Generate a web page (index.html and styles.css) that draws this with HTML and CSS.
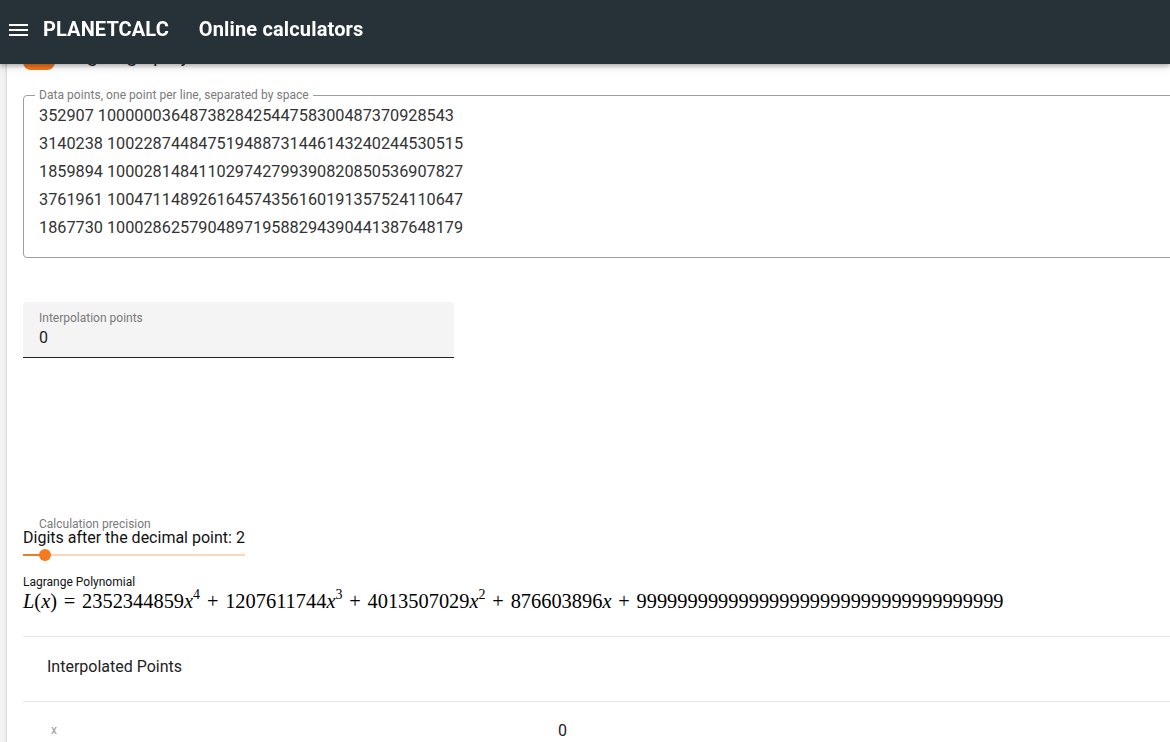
FILE: index.html
```html
<!DOCTYPE html>
<html lang="en">
<head>
<meta charset="utf-8">
<title>PLANETCALC - Lagrange polynomial</title>
<link rel="stylesheet" href="styles.css">
</head>
<body>
<header class="topbar">
  <span class="menu-icon"><span></span><span></span><span></span></span>
  <span class="brand">PLANETCALC</span>
  <span class="section">Online calculators</span>
</header>
<main class="card">
  <div class="title-row">
    <span class="toggle"></span>
    <span class="title">Lagrange polynomial</span>
  </div>
  <fieldset class="outlined">
    <legend>Data points, one point per line, separated by space</legend>
    <div class="data-lines">
      <div>352907 100000036487382842544758300487370928543</div>
      <div>3140238 100228744847519488731446143240244530515</div>
      <div>1859894 100028148411029742799390820850536907827</div>
      <div>3761961 100471148926164574356160191357524110647</div>
      <div>1867730 100028625790489719588294390441387648179</div>
    </div>
  </fieldset>
  <div class="filled">
    <div class="filled-label">Interpolation points</div>
    <div class="filled-value">0</div>
  </div>
  <div class="precision">
    <div class="precision-label">Calculation precision</div>
    <div class="precision-value">Digits after the decimal point: 2</div>
    <div class="slider"><span class="slider-fill"></span><span class="slider-thumb"></span></div>
  </div>
  <div class="result">
    <div class="result-label">Lagrange Polynomial</div>
    <div class="formula"><i>L</i>(<i>x</i>) <span class="op">=</span> 2352344859<i>x</i><sup>4</sup> <span class="op">+</span> 1207611744<i>x</i><sup>3</sup> <span class="op">+</span> 4013507029<i>x</i><sup>2</sup> <span class="op">+</span> 876603896<i>x</i> <span class="op">+</span> 999999999999999999999999999999999999</div>
  </div>
  <div class="table">
    <div class="table-title">Interpolated Points</div>
    <div class="table-row">
      <span class="col-head">x</span>
      <span class="col-val">0</span>
    </div>
  </div>
</main>
</body>
</html>
```
FILE: styles.css
```css
html, body {
  margin: 0;
  padding: 0;
  overflow: hidden;
  background: #f2f2f2;
  font-family: Roboto, "Liberation Sans", sans-serif;
  color: rgba(0, 0, 0, 0.87);
}

.topbar {
  position: fixed;
  top: 0;
  left: 0;
  right: 0;
  height: 64px;
  padding-bottom: 7px;
  box-sizing: border-box;
  background: #263238;
  color: #fff;
  display: flex;
  align-items: center;
  box-shadow: 0 2px 4px rgba(0,0,0,0.25), 0 4px 8px rgba(0,0,0,0.1);
  z-index: 10;
}

.menu-icon {
  display: flex;
  flex-direction: column;
  gap: 3px;
  margin-left: 9px;
  width: 19px;
  margin-top: 2px;
}
.menu-icon span {
  display: block;
  height: 2px;
  background: #fff;
}

.brand {
  margin-left: 15px;
  font-weight: 700;
  font-size: 20px;
  letter-spacing: 0.1px;
}
.section {
  margin-left: 30px;
  font-weight: 700;
  font-size: 20px;
  letter-spacing: 0.15px;
}

.card {
  margin-left: 7px;
  width: 1250px;
  min-height: 760px;
  background: #fff;
  box-shadow: -1px 0 2px rgba(0,0,0,0.12);
  padding: 48px 0 0 16px;
  box-sizing: border-box;
}

.title-row {
  display: flex;
  align-items: flex-start;
  height: 22px;
}
.toggle {
  width: 32px;
  height: 22px;
  border-radius: 8px;
  background: #f5791f;
}
.title {
  margin-left: 10px;
  font-size: 20px;
  line-height: 14px;
}

.outlined {
  margin: 19px 0 0 0;
  padding: 0 0 15px 15px;
  border: 1px solid #9e9e9e;
  border-radius: 4px;
  min-width: 0;
}
.outlined legend {
  font-size: 12px;
  line-height: 12px;
  color: #7a7a7a;
  padding: 0 4px;
  margin-left: -4px;
  letter-spacing: 0.05px;
}
.data-lines {
  font-size: 16.25px;
  line-height: 28px;
  color: #333;
  margin-top: 1px;
}

.filled {
  margin-top: 44px;
  width: 431px;
  height: 56px;
  background: #f4f4f4;
  border-radius: 4px 4px 0 0;
  border-bottom: 1px solid #222;
  padding: 9px 0 0 16px;
  box-sizing: border-box;
}
.filled-label {
  font-size: 12px;
  line-height: 14px;
  color: #7a7a7a;
}
.filled-value {
  font-size: 16px;
  line-height: 20px;
  margin-top: 3px;
  color: #222;
}

.precision {
  margin-top: 160px;
  width: 222px;
}
.precision-label {
  font-size: 12px;
  line-height: 12px;
  color: #7a7a7a;
  padding-left: 16px;
}
.precision-value {
  font-size: 16px;
  line-height: 18px;
  margin-top: -1px;
  color: #111;
}
.slider {
  position: relative;
  height: 2px;
  margin-top: 7px;
  background: #fdd6b9;
}
.slider-fill {
  position: absolute;
  left: 0;
  top: 0;
  width: 22px;
  height: 2px;
  background: #f5791f;
}
.slider-thumb {
  position: absolute;
  left: 16px;
  top: -5px;
  width: 12px;
  height: 12px;
  border-radius: 50%;
  background: #f5791f;
}

.result {
  margin-top: 19px;
}
.result-label {
  font-size: 12px;
  line-height: 14px;
  color: #111;
}
.formula {
  font-family: "Liberation Serif", "Times New Roman", serif;
  font-size: 20.4px;
  line-height: 24px;
  white-space: nowrap;
  color: #000;
}
.formula i { font-style: italic; }
.formula sup {
  font-size: 14px;
  vertical-align: 9px;
  line-height: 0;
}
.formula .op { padding: 0 1.7px; }

.table {
  margin-top: 23px;
  border-top: 1px solid #e6e6e6;
}
.table-title {
  display: flex;
  align-items: center;
  padding-left: 24px;
  padding-bottom: 5px;
  font-size: 16px;
  color: #222;
  border-bottom: 1px solid #e6e6e6;
  box-sizing: content-box;
  height: 59px;
}
.table-row {
  display: flex;
  align-items: center;
  height: 56px;
}
.col-head {
  width: 507px;
  padding-left: 28px;
  font-size: 12px;
  color: #9a9a9a;
}
.col-val {
  font-size: 16px;
  color: #222;
}
```
